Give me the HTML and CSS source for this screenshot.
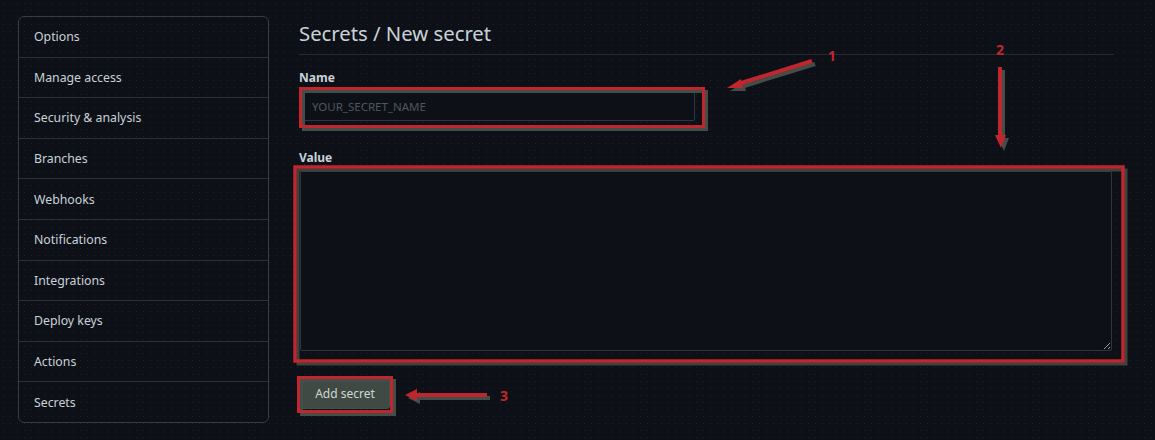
FILE: index.html
```html
<!DOCTYPE html>
<html lang="en">
<head>
<meta charset="utf-8">
<title>Secrets / New secret</title>
<link rel="stylesheet" href="styles.css">
</head>
<body>
<div class="page">
  <nav class="sidebar">
    <a class="nav-item">Options</a>
    <a class="nav-item">Manage access</a>
    <a class="nav-item">Security &amp; analysis</a>
    <a class="nav-item">Branches</a>
    <a class="nav-item">Webhooks</a>
    <a class="nav-item">Notifications</a>
    <a class="nav-item">Integrations</a>
    <a class="nav-item">Deploy keys</a>
    <a class="nav-item">Actions</a>
    <a class="nav-item">Secrets</a>
  </nav>
  <main class="content">
    <h2 class="title">Secrets / New secret</h2>
    <form class="form">
      <label class="label" for="name">Name</label>
      <input class="input" id="name" type="text" placeholder="YOUR_SECRET_NAME">
      <label class="label label-value" for="value">Value</label>
      <textarea class="textarea" id="value"></textarea>
      <button class="btn" type="button">Add secret</button>
    </form>
  </main>
</div>
<svg class="annotations" width="1155" height="440" viewBox="0 0 1155 440">
  <g class="shadow" transform="translate(3,3)">
    <rect x="300.5" y="88.5" width="403" height="38" fill="none" stroke="#454d48" stroke-width="3"/>
    <rect x="295" y="167" width="828" height="194" fill="none" stroke="#3c4440" stroke-width="3"/>
    <rect x="298.5" y="377.5" width="93" height="34" fill="none" stroke="#454d48" stroke-width="3"/>
    <line x1="812" y1="61" x2="738" y2="84" stroke="#454d48" stroke-width="4"/>
    <polygon points="727,88 741,79 743,88" fill="#454d48"/>
    <line x1="1000" y1="67" x2="1000" y2="136" stroke="#454d48" stroke-width="4"/>
    <polygon points="995,135 1006,135 1001,148" fill="#454d48"/>
    <line x1="487" y1="395" x2="414" y2="395" stroke="#454d48" stroke-width="4"/>
    <polygon points="405,395 417,389 417,401" fill="#454d48"/>
  </g>
  <g class="red">
    <rect x="300.5" y="88.5" width="403" height="38" fill="none" stroke="#c0262d" stroke-width="3"/>
    <rect x="295" y="167" width="828" height="194" fill="none" stroke="#c0262d" stroke-width="3.5"/>
    <rect x="298.5" y="377.5" width="93" height="34" fill="none" stroke="#c0262d" stroke-width="3"/>
    <line x1="812" y1="61" x2="738" y2="84" stroke="#c0262d" stroke-width="4"/>
    <polygon points="727,88 741,79 743,88" fill="#c0262d"/>
    <line x1="1000" y1="67" x2="1000" y2="136" stroke="#c0262d" stroke-width="4"/>
    <polygon points="995,135 1006,135 1001,148" fill="#c0262d"/>
    <line x1="487" y1="395" x2="414" y2="395" stroke="#c0262d" stroke-width="4"/>
    <polygon points="405,395 417,389 417,401" fill="#c0262d"/>
  </g>
  <text class="num" x="828" y="61">1</text>
  <text class="num" x="996" y="55">2</text>
  <text class="num" x="500" y="401">3</text>
</svg>
</body>
</html>
```
FILE: styles.css
```css
* { box-sizing: border-box; }

html, body {
  margin: 0;
  padding: 0;
}

body {
  width: 1155px;
  height: 440px;
  overflow: hidden;
  position: relative;
  background-color: #0d1117;
  background-image: radial-gradient(rgba(120, 130, 140, 0.16) 0.7px, transparent 0.9px);
  background-size: 7px 7px;
  font-family: "Noto Sans", "Open Sans", "DejaVu Sans", sans-serif;
  color: #c9d1d9;
}

.page {
  display: flex;
  align-items: flex-start;
  gap: 30px;
  padding: 16px 0 0 18px;
}

.sidebar {
  width: 251px;
  display: flex;
  flex-direction: column;
  border: 1px solid #373c3c;
  border-radius: 6px;
}

.nav-item {
  display: flex;
  align-items: center;
  height: 40.6px;
  padding: 0 15px;
  font-size: 12.3px;
  color: #c9d1d9;
  border-top: 1px solid #2c3132;
}

.nav-item:first-child {
  border-top: none;
  height: 39.6px;
}

.content {
  width: 815px;
}

.title {
  margin: 2px 0 0;
  padding-bottom: 6px;
  font-size: 20.3px;
  line-height: 30px;
  font-weight: 400;
  color: #c9d1d9;
  border-bottom: 1px solid #252a30;
}

.form {
  display: flex;
  flex-direction: column;
  align-items: flex-start;
  padding-top: 14px;
}

.label {
  font-size: 12px;
  line-height: 18px;
  font-weight: 700;
  color: #c9d1d9;
  margin-bottom: 5px;
}

.label-value {
  margin-top: 28px;
  margin-bottom: 4px;
}

.input {
  margin-left: 3px;
  width: 393px;
  height: 29px;
  padding: 0 9px;
  background: #0d1117;
  border: 1px solid #30363d;
  border-radius: 2px;
  font-family: inherit;
  font-size: 11.5px;
  color: #c9d1d9;
}

.input::placeholder {
  color: #4f565e;
}

.textarea {
  margin-left: 1px;
  width: 812px;
  height: 180px;
  background: #0d1117;
  border: 1px solid #30363d;
  border-radius: 2px;
  resize: vertical;
}

.btn {
  margin-top: 27px;
  margin-left: 1px;
  width: 90px;
  height: 31px;
  background: #3f4a44;
  border: 1px solid #46504a;
  border-radius: 3px;
  font-family: inherit;
  font-size: 12px;
  color: #d0d6d2;
}

.annotations {
  position: absolute;
  top: 0;
  left: 0;
  pointer-events: none;
}

.num {
  font-family: "Noto Sans", "DejaVu Sans", sans-serif;
  font-size: 14px;
  font-weight: 700;
  fill: #c0262d;
}
```
